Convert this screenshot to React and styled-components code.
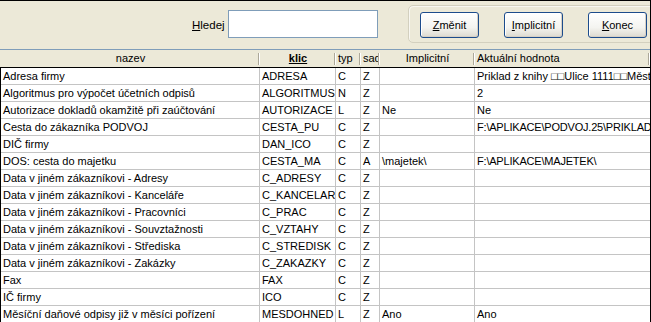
import styled, { createGlobalStyle } from "styled-components";

const GlobalStyle = createGlobalStyle`
  html, body {
    margin: 0;
    padding: 0;
    background: #ece9d8;
  }
  * {
    box-sizing: border-box;
  }
`;

const COLUMNS = "259px 76px 25px 19px 95px 1fr";

const Window = styled.div`
  width: 651px;
  height: 322px;
  display: flex;
  flex-direction: column;
  overflow: hidden;
  background: #ece9d8;
  border-top: 1px solid #000;
  border-right: 1px solid #000;
  font-family: "Liberation Sans", Arial, sans-serif;
  font-size: 11px;
  color: #000;
`;

const Toolbar = styled.div`
  height: 49px;
  flex: none;
  display: flex;
  align-items: flex-start;
  padding-left: 192px;
  border-bottom: 1px solid #7f9db9;
  overflow: hidden;
`;

const SearchLabel = styled.label`
  flex: none;
  margin-top: 18px;
  width: 36px;
  font-size: 11.5px;
`;

const Key = styled.span`
  text-decoration: underline;
`;

const SearchInput = styled.input`
  flex: none;
  margin-top: 9px;
  width: 150px;
  height: 28px;
  border: 1px solid #7f9db9;
  background: #fff;
  outline: none;
`;

const ButtonFrame = styled.div`
  margin-top: 4px;
  margin-left: 30px;
  flex: none;
  width: 256px;
  height: 38px;
  display: flex;
  gap: 25px;
  padding: 6px 0 0 11px;
  border: 1px solid #d3d0bf;
  border-radius: 5px;
  box-shadow: inset 1px 1px 0 #f8f7f1;
`;

const Button = styled.button`
  flex: none;
  width: 59px;
  height: 26px;
  padding: 0;
  border: 1px solid #1c4c8c;
  border-radius: 3px;
  background: linear-gradient(#ffffff 0%, #f4f4f0 60%, #dcdad0 100%);
  box-shadow: inset -1px -1px 0 #d6d0c5, inset 1px 1px 0 #fff;
  font-family: "Liberation Sans", Arial, sans-serif;
  font-size: 11px;
  color: #000;
`;

const HeaderRow = styled.div`
  height: 17px;
  flex: none;
  display: grid;
  grid-template-columns: ${COLUMNS};
  padding-left: 1px;
`;

const HeaderCell = styled.div`
  position: relative;
  padding: 1px 2px 0;
  line-height: 15px;
  white-space: nowrap;
  overflow: hidden;
  text-align: ${(p) => (p.$center ? "center" : "left")};
  font-weight: ${(p) => (p.$bold ? "bold" : "normal")};
  text-decoration: ${(p) => (p.$bold ? "underline" : "none")};

  &::after {
    content: "";
    position: absolute;
    right: 1px;
    top: 3px;
    bottom: 2px;
    width: 1px;
    background: #aca899;
    box-shadow: 1px 0 0 #fff;
  }
`;

const Grid = styled.div`
  flex: 1;
  background: #fff;
  border-top: 1px solid #000;
  border-left: 1px solid #000;
  overflow: hidden;
`;

const Row = styled.div`
  height: 17px;
  display: grid;
  grid-template-columns: ${COLUMNS};
  border-bottom: 1px solid #c4c4c4;
`;

const Cell = styled.div`
  padding-left: 2px;
  line-height: 16px;
  white-space: nowrap;
  overflow: hidden;
  border-right: 1px solid #c4c4c4;
  letter-spacing: ${(p) => (p.$tight ? "-0.2px" : "0")};

  &:last-child {
    border-right: none;
  }
`;

const columns = [
  { label: "nazev", center: true },
  { label: "klic", center: true, bold: true },
  { label: "typ" },
  { label: "sada" },
  { label: "Implicitní", center: true },
  { label: "Aktuální hodnota" },
];

const rows = [
  ["Adresa firmy", "ADRESA", "C", "Z", "", "Priklad z knihy \u25A1\u25A1Ulice 1111\u25A1\u25A1Město"],
  ["Algoritmus pro výpočet účetních odpisů", "ALGORITMUS", "N", "Z", "", "2"],
  ["Autorizace dokladů okamžitě při zaúčtování", "AUTORIZACE", "L", "Z", "Ne", "Ne"],
  ["Cesta do zákazníka PODVOJ", "CESTA_PU", "C", "Z", "", "F:\\APLIKACE\\PODVOJ.25\\PRIKLAD"],
  ["DIČ firmy", "DAN_ICO", "C", "Z", "", ""],
  ["DOS: cesta do majetku", "CESTA_MA", "C", "A", "\\majetek\\", "F:\\APLIKACE\\MAJETEK\\"],
  ["Data v jiném zákazníkovi - Adresy", "C_ADRESY", "C", "Z", "", ""],
  ["Data v jiném zákazníkovi - Kanceláře", "C_KANCELAR", "C", "Z", "", ""],
  ["Data v jiném zákazníkovi - Pracovníci", "C_PRAC", "C", "Z", "", ""],
  ["Data v jiném zákazníkovi - Souvztažnosti", "C_VZTAHY", "C", "Z", "", ""],
  ["Data v jiném zákazníkovi - Střediska", "C_STREDISK", "C", "Z", "", ""],
  ["Data v jiném zákazníkovi - Zakázky", "C_ZAKAZKY", "C", "Z", "", ""],
  ["Fax", "FAX", "C", "Z", "", ""],
  ["IČ firmy", "ICO", "C", "Z", "", ""],
  ["Měsíční daňové odpisy již v měsíci pořízení", "MESDOHNED", "L", "Z", "Ano", "Ano"],
];

export default function App() {
  return (
    <>
      <GlobalStyle />
      <Window>
        <Toolbar>
          <SearchLabel>
            <Key>H</Key>ledej
          </SearchLabel>
          <SearchInput />
          <ButtonFrame>
            <Button>
              <Key>Z</Key>měnit
            </Button>
            <Button>
              <Key>I</Key>mplicitní
            </Button>
            <Button>
              <Key>K</Key>onec
            </Button>
          </ButtonFrame>
        </Toolbar>
        <HeaderRow>
          {columns.map((c) => (
            <HeaderCell key={c.label} $center={c.center} $bold={c.bold}>
              {c.label}
            </HeaderCell>
          ))}
        </HeaderRow>
        <Grid>
          {rows.map((r) => (
            <Row key={r[1]}>
              {r.map((v, i) => (
                <Cell key={i} $tight={i === 5 && v.startsWith("F:")}>
                  {v}
                </Cell>
              ))}
            </Row>
          ))}
        </Grid>
      </Window>
    </>
  );
}
